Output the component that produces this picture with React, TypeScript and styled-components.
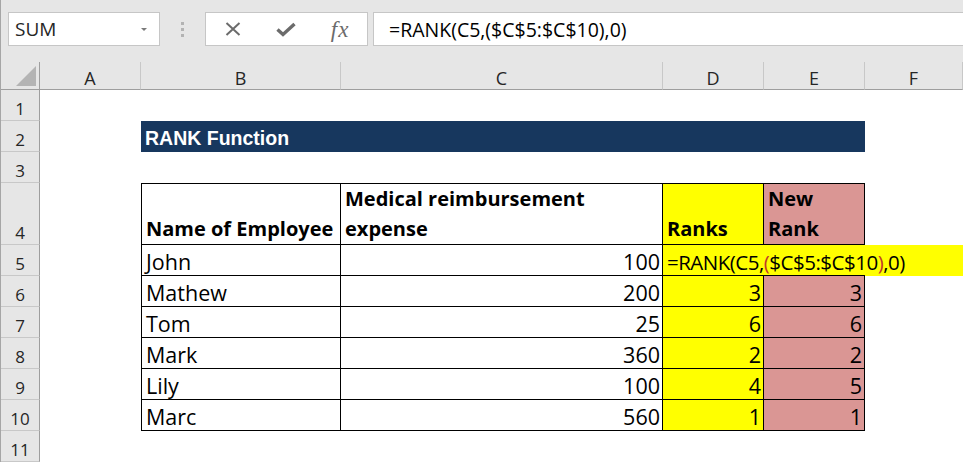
import React from 'react';
import styled, { createGlobalStyle } from 'styled-components';

const GlobalStyle = createGlobalStyle`
  html, body {
    margin: 0;
    padding: 0;
    background: #ffffff;
  }
  body {
    font-family: "Open Sans", "Noto Sans", sans-serif;
    color: #000;
    overflow: hidden;
  }
  * {
    box-sizing: border-box;
  }
`;

const Window = styled.div`
  width: 963px;
  height: 462px;
  border-left: 1px solid #a6a6a6;
  background: #ffffff;
  overflow: hidden;
`;

/* formula bar */

const Toolbar = styled.div`
  display: flex;
  align-items: stretch;
  height: 62px;
  padding: 12px 0 16px 7px;
  background: #e6e6e6;
`;

const NameBox = styled.div`
  width: 152px;
  display: flex;
  align-items: center;
  justify-content: space-between;
  padding: 0 12px 0 6px;
  background: #ffffff;
  border: 1px solid #c6c6c6;
  font-size: 19px;
  color: #262626;
`;

const DropArrow = styled.span`
  width: 0;
  height: 0;
  border-left: 3px solid transparent;
  border-right: 3px solid transparent;
  border-top: 3px solid #7a7a7a;
`;

const Grip = styled.div`
  width: 3px;
  margin: 0 21px;
  display: flex;
  flex-direction: column;
  justify-content: center;
  gap: 3px;
`;

const GripDot = styled.span`
  width: 3px;
  height: 3px;
  background: #b3b3b3;
`;

const FxButtons = styled.div`
  width: 163px;
  display: grid;
  grid-template-columns: repeat(3, 1fr);
  align-items: center;
  justify-items: center;
  background: #ffffff;
  border: 1px solid #c6c6c6;
`;

const FxGlyph = styled.span`
  font-family: "Liberation Serif", "DejaVu Serif", serif;
  font-style: italic;
  font-size: 23px;
  line-height: 1;
  color: #6b6b6b;
  letter-spacing: 1px;
`;

const FormulaBox = styled.div`
  flex: 1;
  margin: 0 -2px 0 5px;
  display: flex;
  align-items: center;
  padding-left: 15px;
  background: #ffffff;
  border: 1px solid #c6c6c6;
  font-size: 19.5px;
  color: #000;
  white-space: nowrap;
`;

/* sheet */

const Sheet = styled.div`
  display: grid;
  grid-template-columns: 39px 101px 200px 322px 101px 101px 98px;
  grid-template-rows: 28px repeat(3, 31px) 62px repeat(7, 31px);
`;

const Corner = styled.div`
  display: flex;
  align-items: flex-end;
  justify-content: flex-end;
  padding: 0 3px 3px 0;
  background: #e6e6e6;
  border-right: 1px solid #9e9e9e;
  border-bottom: 1px solid #9e9e9e;
`;

const CornerTriangle = styled.span`
  width: 20px;
  height: 20px;
  background: #b4b4b4;
  clip-path: polygon(100% 0, 100% 100%, 0 100%);
`;

const ColHead = styled.div`
  display: flex;
  align-items: flex-end;
  justify-content: center;
  padding-bottom: 2px;
  background: #e6e6e6;
  border-right: 1px solid #c8c8c8;
  border-bottom: 1px solid #9e9e9e;
  font-size: 18px;
  line-height: 1;
  color: #262626;
`;

const RowHead = styled.div`
  display: flex;
  align-items: flex-end;
  justify-content: center;
  padding-bottom: 3px;
  background: #e6e6e6;
  border-right: 1px solid #9e9e9e;
  border-bottom: 1px solid #c8c8c8;
  font-size: 17px;
  line-height: 1;
  color: #262626;
`;

const Blank = styled.div<{ $span?: number }>`
  grid-column: span ${(p) => p.$span ?? 1};
`;

const TitleCell = styled.div`
  grid-column: span 4;
  display: flex;
  align-items: flex-end;
  padding: 0 0 4px 4px;
  background: #17375e;
  color: #ffffff;
  font-family: "Liberation Sans", Arial, sans-serif;
  font-weight: 700;
  font-size: 19.5px;
  line-height: 1;
`;

type Fill = 'yellow' | 'pink';

const fills: Record<Fill, string> = {
  yellow: '#ffff00',
  pink: '#da9694',
};

const Cell = styled.div<{
  $fill?: Fill;
  $right?: boolean;
  $bold?: boolean;
  $left?: boolean;
  $top?: boolean;
}>`
  display: flex;
  align-items: flex-end;
  justify-content: ${(p) => (p.$right ? 'flex-end' : 'flex-start')};
  padding: 0 2px 0 4px;
  background: ${(p) => (p.$fill ? fills[p.$fill] : '#ffffff')};
  border-right: 1px solid #000;
  border-bottom: 1px solid #000;
  border-left: ${(p) => (p.$left ? '1px solid #000' : 'none')};
  border-top: ${(p) => (p.$top ? '1px solid #000' : 'none')};
  font-size: ${(p) => (p.$bold ? '20px' : '21.5px')};
  font-weight: ${(p) => (p.$bold ? 700 : 400)};
  line-height: ${(p) => (p.$bold ? '30px' : '27px')};
  white-space: nowrap;
`;

const CellText = styled.span`
  display: block;
`;

// cell D5 in edit mode, spilling over E5:F5
const EditCell = styled.div`
  grid-column: span 3;
  display: flex;
  align-items: flex-end;
  padding-left: 4px;
  background: linear-gradient(#000, #000) left bottom / 202px 1px no-repeat, #ffff00;
  font-size: 20.5px;
  letter-spacing: -0.5px;
  line-height: 27px;
  white-space: nowrap;
`;

const Paren = styled.span`
  color: #c0392b;
`;

const people = [
  { name: 'Mathew', amount: 200, rank: 3, newRank: 3 },
  { name: 'Tom', amount: 25, rank: 6, newRank: 6 },
  { name: 'Mark', amount: 360, rank: 2, newRank: 2 },
  { name: 'Lily', amount: 100, rank: 4, newRank: 5 },
  { name: 'Marc', amount: 560, rank: 1, newRank: 1 },
];

const columns = ['A', 'B', 'C', 'D', 'E', 'F'];

const App: React.FC = () => {
  return (
    <Window>
      <GlobalStyle />
      <Toolbar>
        <NameBox>
          <span>SUM</span>
          <DropArrow />
        </NameBox>
        <Grip>
          <GripDot />
          <GripDot />
          <GripDot />
        </Grip>
        <FxButtons>
          <svg width="16" height="14" viewBox="0 0 16 14">
            <path d="M1.5 1 L14.5 13 M14.5 1 L1.5 13" stroke="#6b6b6b" strokeWidth="2" fill="none" />
          </svg>
          <svg width="20" height="15" viewBox="0 0 20 15">
            <path d="M1.5 7.5 L7 12.5 L18.5 2" stroke="#6b6b6b" strokeWidth="3.4" fill="none" />
          </svg>
          <FxGlyph>fx</FxGlyph>
        </FxButtons>
        <FormulaBox>=RANK(C5,($C$5:$C$10),0)</FormulaBox>
      </Toolbar>

      <Sheet>
        <Corner>
          <CornerTriangle />
        </Corner>
        {columns.map((c) => (
          <ColHead key={c}>{c}</ColHead>
        ))}

        <RowHead>1</RowHead>
        <Blank $span={6} />

        <RowHead>2</RowHead>
        <Blank />
        <TitleCell>RANK Function</TitleCell>
        <Blank />

        <RowHead>3</RowHead>
        <Blank $span={6} />

        <RowHead>4</RowHead>
        <Blank />
        <Cell $bold $left $top>
          <CellText>Name of Employee</CellText>
        </Cell>
        <Cell $bold $top>
          <CellText>
            Medical reimbursement
            <br />
            expense
          </CellText>
        </Cell>
        <Cell $bold $top $fill="yellow">
          <CellText>Ranks</CellText>
        </Cell>
        <Cell $bold $top $fill="pink">
          <CellText>
            New
            <br />
            Rank
          </CellText>
        </Cell>
        <Blank />

        <RowHead>5</RowHead>
        <Blank />
        <Cell $left>
          <CellText>John</CellText>
        </Cell>
        <Cell $right>
          <CellText>100</CellText>
        </Cell>
        <EditCell>
          =RANK(C5,<Paren>(</Paren>$C$5:$C$10<Paren>)</Paren>,0)
        </EditCell>

        {people.map((p, i) => (
          <React.Fragment key={p.name}>
            <RowHead>{i + 6}</RowHead>
            <Blank />
            <Cell $left>
              <CellText>{p.name}</CellText>
            </Cell>
            <Cell $right>
              <CellText>{p.amount}</CellText>
            </Cell>
            <Cell $right $fill="yellow">
              <CellText>{p.rank}</CellText>
            </Cell>
            <Cell $right $fill="pink">
              <CellText>{p.newRank}</CellText>
            </Cell>
            <Blank />
          </React.Fragment>
        ))}

        <RowHead>11</RowHead>
        <Blank $span={6} />
      </Sheet>
    </Window>
  );
};

export default App;
